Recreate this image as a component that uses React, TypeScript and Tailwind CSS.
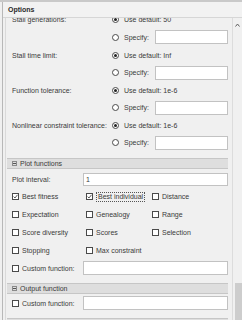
import React from "react";

const txt = "text-[#3a3a3a]";

function Radio({ on }: { on?: boolean }) {
  return (
    <span className="flex h-[7px] w-[7px] shrink-0 items-center justify-center rounded-full border border-[#4a4a4a] bg-white">
      {on && <span className="h-[3px] w-[3px] rounded-full bg-[#222]" />}
    </span>
  );
}

function Check({ on }: { on?: boolean }) {
  return (
    <span className="flex h-[7px] w-[7px] shrink-0 items-center justify-center border border-[#4a4a4a] bg-white">
      {on && (
        <svg width="5" height="5" viewBox="0 0 5 5">
          <path d="M0.6 2.6 L2 4 L4.5 0.8" fill="none" stroke="#333" strokeWidth="0.8" />
        </svg>
      )}
    </span>
  );
}

function Field({ w }: { w: string }) {
  return <span className={`block h-[14px] shrink-0 border border-[#c2c2c2] bg-white ${w}`} />;
}

function OptionRow({ label, h, value }: { label: string; h: string; value: string }) {
  return (
    <div className={`flex items-center ${h}`}>
      <span className="w-[100px] shrink-0 whitespace-nowrap">{label}</span>
      <Radio on />
      <span className="ml-[5px] whitespace-nowrap">Use default: {value}</span>
    </div>
  );
}

function SpecifyRow({ h }: { h: string }) {
  return (
    <div className={`flex items-center ${h}`}>
      <span className="w-[100px] shrink-0" />
      <Radio />
      <span className="ml-[5px] w-[31px] shrink-0">Specify:</span>
      <Field w="w-[73px]" />
    </div>
  );
}

function SectionBar({ title }: { title: string }) {
  return (
    <div className="ml-[1px] flex h-[11px] items-center border-y border-[#c6c6c6] bg-[#dedede] pl-[5px]">
      <span className="flex h-[5px] w-[5px] items-center justify-center border border-[#8a8a8a]">
        <span className="h-px w-[3px] bg-[#555]" />
      </span>
      <span className="ml-[3px]">{title}</span>
    </div>
  );
}

function CheckItem({ label, on, w, focus }: { label: string; on?: boolean; w?: string; focus?: boolean }) {
  return (
    <div className={`flex shrink-0 items-center ${w ?? ""}`}>
      <Check on={on} />
      <span
        className={`ml-[3px] whitespace-nowrap ${focus ? "border border-dotted border-[#555] px-px leading-[8px]" : ""}`}
      >
        {label}
      </span>
    </div>
  );
}

export default function App() {
  const grid: { label: string; on?: boolean; focus?: boolean }[][] = [
    [{ label: "Best fitness", on: true }, { label: "Best individual", on: true, focus: true }, { label: "Distance" }],
    [{ label: "Expectation" }, { label: "Genealogy" }, { label: "Range" }],
    [{ label: "Score diversity" }, { label: "Scores" }, { label: "Selection" }],
    [{ label: "Stopping" }, { label: "Max constraint" }],
  ];
  const rowH = ["h-[17px]", "h-[18px]", "h-[18px]", "h-[18px]"];

  return (
    <div
      className={`flex h-[320px] w-[242px] flex-col overflow-hidden bg-[#f0f0f0] text-[7px] leading-none ${txt}`}
      style={{ fontFamily: '"Liberation Sans", Arial, sans-serif' }}
    >
      <div className="h-[2px] shrink-0 bg-[#c9c9c9]" />
      <div className="flex min-h-0 flex-1 flex-col pl-[2px]">
        <div className="flex min-h-0 flex-1 flex-col border-l border-[#b8b8b8]">
          <div className="flex h-[16px] shrink-0 items-center border-b border-[#d6d6d6] bg-[#f2f2f2] pl-[5px] font-bold text-[#2a2a2a]">
            Options
          </div>
          <div className="flex min-h-0 flex-1">
            <div className="w-[3px] shrink-0 border-r border-[#dadada]" />
            <div className="min-w-0 flex-1 overflow-hidden">
              <div className="-mt-[8px] pr-[4px]">
                <div className="pl-[6px]">
                  <OptionRow label="Stall generations:" h="h-[18px]" value="50" />
                  <SpecifyRow h="h-[18px]" />
                  <OptionRow label="Stall time limit:" h="h-[18px]" value="Inf" />
                  <SpecifyRow h="h-[17px]" />
                  <OptionRow label="Function tolerance:" h="h-[18px]" value="1e-6" />
                  <SpecifyRow h="h-[17px]" />
                  <OptionRow label="Nonlinear constraint tolerance:" h="h-[18px]" value="1e-6" />
                  <SpecifyRow h="h-[17px]" />
                </div>
                <div className="mt-[7px]">
                  <SectionBar title="Plot functions" />
                </div>
                <div className="pl-[6px]">
                  <div className="mt-px flex h-[18px] items-center">
                    <span className="w-[71px] shrink-0">Plot interval:</span>
                    <span className="flex h-[13px] w-[145px] shrink-0 items-center border border-[#c2c2c2] bg-white pl-[2px]">
                      1
                    </span>
                  </div>
                  {grid.map((row, i) => (
                    <div key={i} className={`flex items-center ${rowH[i]}`}>
                      {row.map((c, j) => (
                        <CheckItem
                          key={c.label}
                          label={c.label}
                          on={c.on}
                          focus={c.focus}
                          w={j === 0 ? "w-[74px]" : j === 1 ? "w-[66px]" : undefined}
                        />
                      ))}
                    </div>
                  ))}
                  <div className="flex h-[18px] items-center">
                    <CheckItem label="Custom function:" w="w-[71px]" />
                    <Field w="w-[145px]" />
                  </div>
                </div>
                <div className="mt-[6px]">
                  <SectionBar title="Output function" />
                </div>
                <div className="pl-[6px]">
                  <div className="flex h-[18px] items-center">
                    <CheckItem label="Custom function:" w="w-[71px]" />
                    <Field w="w-[145px]" />
                  </div>
                </div>
                <div className="ml-[1px] mt-[6px] h-[10px] border-t border-[#c6c6c6] bg-[#dedede]" />
              </div>
            </div>
            <div className="flex w-[10px] shrink-0 flex-col border-l border-[#dcdcdc] bg-[#f0f0f0]">
              <div className="flex h-[9px] items-end justify-center">
                <svg width="5" height="4" viewBox="0 0 5 4">
                  <path d="M0.5 3.5 L2.5 1 L4.5 3.5" fill="none" stroke="#606060" strokeWidth="1" />
                </svg>
              </div>
              <div className="flex-1" />
              <div className="ml-[2px] h-[37px] bg-[#cdcdcd]" />
            </div>
          </div>
        </div>
      </div>
    </div>
  );
}
